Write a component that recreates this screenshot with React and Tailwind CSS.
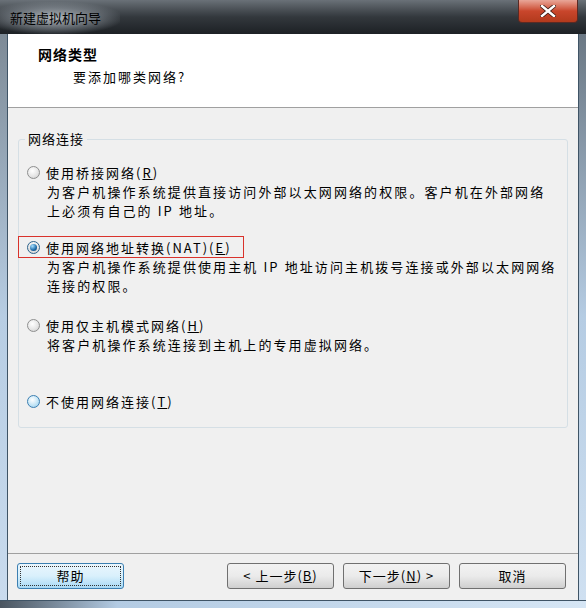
import React from 'react';

const font = { fontFamily: '"Noto Sans CJK SC", "Liberation Sans", sans-serif' };

function Radio({ state }) {
  if (state === 'checked') {
    return (
      <span className="w-[13px] h-[13px] rounded-full border border-[#2c628b] bg-gradient-to-b from-[#f4f4f4] to-[#d9d9d9] flex items-center justify-center shrink-0">
        <span className="w-[7px] h-[7px] rounded-full bg-[radial-gradient(circle_at_35%_30%,#a6e0ff,#1d6aa8_60%,#0b3d66)]" />
      </span>
    );
  }
  if (state === 'hover') {
    return (
      <span className="w-[13px] h-[13px] rounded-full border border-[#3c7fb1] bg-[radial-gradient(circle_at_40%_35%,#ffffff,#c4e5f6_55%,#8fcbec)] shrink-0" />
    );
  }
  return (
    <span className="w-[13px] h-[13px] rounded-full border border-[#8e8f8f] bg-[radial-gradient(circle_at_40%_35%,#ffffff,#e6e6e6_55%,#c9c9c9)] shrink-0" />
  );
}

function Option({ state, label, hotkey, after, lines, boxed }) {
  return (
    <div>
      <div className={'flex items-center h-[20px] ' + (boxed ? 'outline outline-1 outline-[#d9322b] -ml-[8px] pl-[8px] w-[224px]' : '')}>
        <Radio state={state} />
        <span className="ml-[6px] text-[13px] tracking-[2px] text-black leading-none">
          {label}(<span className="underline">{hotkey}</span>){after}
        </span>
      </div>
      {lines && (
        <div className="ml-[20px] text-[13px] tracking-[2.1px] text-black leading-[19px]">
          {lines.map((l, i) => (
            <div key={i}>{l}</div>
          ))}
        </div>
      )}
    </div>
  );
}

function Button({ children, primary }) {
  return (
    <div
      className={
        'w-[107px] h-[26px] rounded-[3px] border flex items-center justify-center text-[13px] text-black tracking-[1px] ' +
        (primary
          ? 'border-[#3c7fb1] bg-gradient-to-b from-[#eaf6fd] via-[#d9f0fc] to-[#a7d9f5] p-[2px]'
          : 'border-[#707070] bg-gradient-to-b from-[#f2f2f2] via-[#ebebeb] to-[#cfcfcf]')
      }
    >
      {primary ? (
        <div className="w-full h-full border border-dotted border-[#333] flex items-center justify-center">{children}</div>
      ) : (
        children
      )}
    </div>
  );
}

export default function App() {
  return (
    <div className="w-[586px] h-[608px] overflow-hidden bg-[#1e2226] flex flex-col" style={font}>
      {/* Title bar */}
      <div className="relative h-[34px] shrink-0 bg-gradient-to-b from-[#6a7178] via-[#33383d] to-[#1d2125]">
        <div className="absolute left-0 top-[2px] w-[120px] h-[32px] bg-[radial-gradient(ellipse_at_45%_50%,rgba(200,206,212,0.85),rgba(150,158,166,0.5)_45%,rgba(80,88,96,0)_75%)]" />
        <div className="absolute left-[10px] top-[8px] text-[13px] text-black">新建虚拟机向导</div>
        <div className="absolute right-[8px] top-0 w-[60px] h-[23px] rounded-b-[4px] border border-t-0 border-[#5a2a24] bg-gradient-to-b from-[#e8a698] via-[#c9462c] to-[#b23a1c] flex items-center justify-center">
          <svg width="16" height="12" viewBox="0 0 16 12">
            <path d="M2 1 L14 11 M14 1 L2 11" stroke="#3a1a14" strokeWidth="4" strokeLinecap="square" />
            <path d="M2 1 L14 11 M14 1 L2 11" stroke="#ffffff" strokeWidth="2.4" strokeLinecap="square" />
          </svg>
        </div>
      </div>

      <div className="flex h-[566px] shrink-0">
        {/* left frame */}
        <div className="w-[8px] bg-gradient-to-b from-[#7d8a96] via-[#b7cde3] to-[#c9dbee] border-r border-[#3f5466]" />
        {/* content */}
        <div className="w-[570px] flex flex-col bg-[#f0f0f0]">
          <div className="h-[74px] bg-white border-b border-[#a0a0a0] pt-[10px]">
            <div className="ml-[30px] text-[14px] font-bold tracking-[1px] text-black leading-[20px]">网络类型</div>
            <div className="ml-[65px] mt-[3px] text-[13px] tracking-[2px] text-black leading-[20px]">要添加哪类网络?</div>
          </div>

          <div className="relative mx-[10px] mt-[31px] h-[289px] border border-[#d5dfe5] rounded-[3px]">
            <div className="absolute -top-[10px] left-[6px] px-[3px] bg-[#f0f0f0] text-[13px] tracking-[1px] text-black leading-[18px]">网络连接</div>
            <div className="pl-[8px] pt-[22px] flex flex-col">
              <Option
                state="off"
                label="使用桥接网络"
                hotkey="R"
                lines={['为客户机操作系统提供直接访问外部以太网网络的权限。客户机在外部网络', '上必须有自己的 IP 地址。']}
              />
              <div className="mt-[17px]">
                <Option
                  state="checked"
                  boxed
                  label="使用网络地址转换(NAT)"
                  hotkey="E"
                  lines={['为客户机操作系统提供使用主机 IP 地址访问主机拨号连接或外部以太网网络', '连接的权限。']}
                />
              </div>
              <div className="mt-[20px]">
                <Option state="off" label="使用仅主机模式网络" hotkey="H" lines={['将客户机操作系统连接到主机上的专用虚拟网络。']} />
              </div>
              <div className="mt-[37px]">
                <Option state="hover" label="不使用网络连接" hotkey="T" />
              </div>
            </div>
          </div>

          <div className="mt-auto border-b border-[#a0a0a0]" />
          <div className="flex items-center h-[46px] pl-[9px] pr-[12px] pb-[3px]">
            <Button primary>帮助</Button>
            <div className="ml-auto flex gap-[9px]">
              <Button>&lt; 上一步(<span className="underline">B</span>)</Button>
              <Button>下一步(<span className="underline">N</span>) &gt;</Button>
              <Button>取消</Button>
            </div>
          </div>
        </div>
        {/* right frame */}
        <div className="w-[8px] bg-gradient-to-b from-[#6b7884] via-[#b5cce3] to-[#cfe0f1] border-l border-[#3f5466]" />
      </div>

      {/* bottom frame */}
      <div className="h-[8px] shrink-0 border-t border-[#3f5466] bg-gradient-to-r from-[#4a5560] via-[#b3cbe3] via-20% to-[#d6e6f5]" />
    </div>
  );
}
